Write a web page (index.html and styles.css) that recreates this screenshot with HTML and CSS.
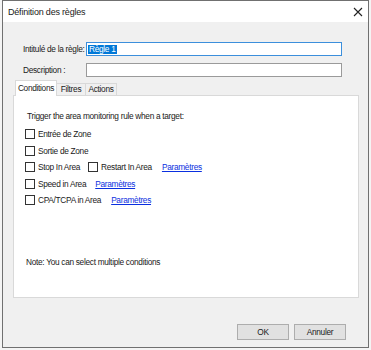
FILE: index.html
```html
<!DOCTYPE html>
<html lang="fr">
<head>
  <meta charset="UTF-8">
  <title>Définition des règles</title>
  <link rel="stylesheet" href="styles.css">
</head>
<body>
  <div class="window">
    <div class="titlebar">
      <span class="title">Définition des règles</span>
      <svg class="close" width="10" height="10" viewBox="0 0 10 10">
        <path d="M1 1 L9 9 M9 1 L1 9" stroke="#222" stroke-width="1.1" fill="none"/>
      </svg>
    </div>

    <div class="fields">
      <label>Intitulé de la règle:</label>
      <div class="textbox focused"><span class="sel">Règle 1</span></div>
      <label>Description :</label>
      <div class="textbox"></div>
    </div>

    <div class="tabs">
      <div class="tab active">Conditions</div>
      <div class="tab">Filtres</div>
      <div class="tab">Actions</div>
    </div>
    <div class="panel">
      <p class="intro">Trigger the area monitoring rule when a target:</p>
      <div class="checks">
        <div class="row"><span class="box"></span><span>Entrée de Zone</span></div>
        <div class="row"><span class="box"></span><span>Sortie de Zone</span></div>
        <div class="row">
          <span class="box"></span><span>Stop In Area</span>
          <span class="box second"></span><span>Restart In Area</span>
          <a href="#" class="link l1">Paramètres</a>
        </div>
        <div class="row"><span class="box"></span><span>Speed in Area</span><a href="#" class="link l2">Paramètres</a></div>
        <div class="row"><span class="box"></span><span>CPA/TCPA in Area</span><a href="#" class="link l3">Paramètres</a></div>
      </div>
      <p class="note">Note: You can select multiple conditions</p>
    </div>

    <div class="buttons">
      <button>OK</button>
      <button>Annuler</button>
    </div>
  </div>
</body>
</html>
```

FILE: styles.css
```css
:root {
  --face: #f0f0f0;
  --line: #d9d9d9;
  --text: #1a1a1a;
}
*, *::before, *::after { box-sizing: border-box; }
body {
  margin: 0;
  background: #f4f4f4;
  font-family: "Liberation Sans", Arial, sans-serif;
  font-size: 8.3px;
  letter-spacing: -0.3px;
  color: var(--text);
}
.window {
  margin-left: 2px;
  width: 367px;
  height: 348px;
  border: 1px solid #707070;
  background: var(--face);
  display: flex;
  flex-direction: column;
}
.titlebar {
  height: 21px;
  background: #fff;
  display: flex;
  align-items: center;
  justify-content: space-between;
  padding: 0 5px 0 5px;
}
.title {
  font-size: 9px;
  letter-spacing: -0.2px;
  line-height: 10px;
}
.close { display: block; }

/* champs du haut */
.fields {
  margin: 20px 0 0 20px;
  display: grid;
  grid-template-columns: 63px 256px;
  row-gap: 7px;
  align-items: start;
}
.fields label {
  line-height: 10px;
  padding-top: 2px;
}
.textbox {
  height: 14px;
  background: #fff;
  border: 1px solid #9a9a9a;
  padding: 1px 1px;
  line-height: 10px;
}
.textbox.focused { border-color: #3c8fdc; }
.sel {
  display: inline-block;
  background: #0078d7;
  color: #fff;
  padding: 0 1px;
  line-height: 9px;
}

/* onglets */
.tabs {
  margin: 3px 0 0 12px;
  height: 15px;
  display: flex;
  align-items: flex-end;
}
.tab {
  height: 12px;
  line-height: 11px;
  padding: 0;
  text-align: center;
  border: 1px solid var(--line);
  border-bottom: none;
  background: var(--face);
}
.tab + .tab { border-left: none; }
.tab.active {
  height: 16px;
  margin-bottom: -1px;
  line-height: 14px;
  background: #fff;
  z-index: 1;
  width: 42px;
}
.tab:nth-child(2) { width: 29px; }
.tab:nth-child(3) { width: 31px; }
.panel {
  margin-left: 10px;
  width: 346px;
  height: 203px;
  background: #fff;
  border: 1px solid var(--line);
  padding: 15px 0 0 11px;
}
.intro {
  margin: 0 0 0 2px;
  line-height: 10px;
}
.checks {
  margin-top: 8px;
  display: flex;
  flex-direction: column;
  gap: 6.5px;
}
.row {
  height: 10px;
  line-height: 10px;
  display: flex;
  align-items: center;
}
.box {
  width: 10px;
  height: 10px;
  border: 1px solid #333;
  background: #fff;
  margin-right: 3px;
  flex: none;
}
.box.second { margin-left: 8px; }
.link {
  color: #0a2fe0;
  text-decoration: underline;
}
.l1 { margin-left: 10px; }
.l2 { margin-left: 9px; }
.l3 { margin-left: 10px; }
.note {
  margin: 52px 0 0 1px;
  line-height: 10px;
}

/* boutons */
.buttons {
  margin: 26px 22px 0 0;
  display: flex;
  justify-content: flex-end;
  gap: 5px;
}
button {
  width: 52px;
  height: 16px;
  padding: 0;
  background: #e1e1e1;
  border: 1px solid #adadad;
  font-family: inherit;
  font-size: 8.3px;
  letter-spacing: -0.3px;
  color: var(--text);
}
```
